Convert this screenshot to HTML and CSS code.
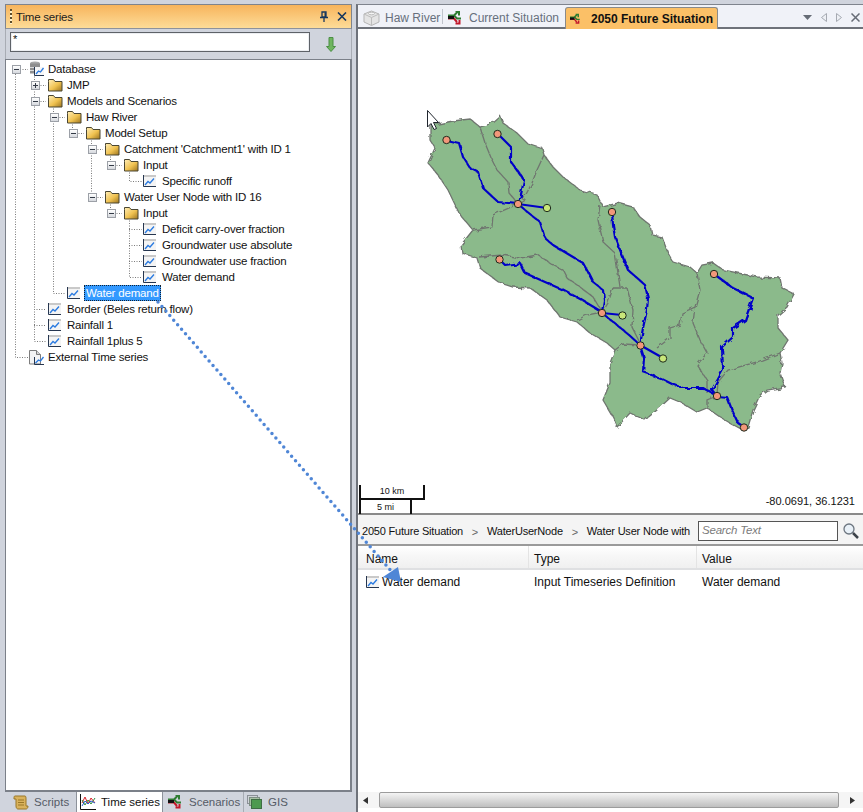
FILE: index.html
```html
<!DOCTYPE html>
<html lang="en">
<head>
<meta charset="utf-8">
<title>Time series</title>
<link rel="stylesheet" href="styles.css">
</head>
<body>
<svg class="defs" width="0" height="0" aria-hidden="true">
  <defs>
    <linearGradient id="fold" x1="0" y1="0" x2="1" y2="1"><stop offset="0" stop-color="#ffeeb8"/><stop offset=".55" stop-color="#f0c250"/><stop offset="1" stop-color="#9c7420"/></linearGradient>
    <symbol id="folder" viewBox="0 0 16 16">
      <path d="M.5 4.500V2.500h5l1.500 2h7v9.500H.5z" fill="url(#fold)" stroke="#4a4632"/>
    </symbol>
    <symbol id="chart" viewBox="0 0 16 16">
      <rect x="0" y="2" width="13" height="12" fill="#f4f4f4"/>
      <path d="M0 3h13" stroke="#c9c9c9" stroke-width="2"/>
      <path d="M.5 2v11.500H13" fill="none" stroke="#26364f"/>
      <path d="M2 12l3-3.500 2 1.500 4-4.500" fill="none" stroke="#2a7ae0" stroke-width="1.300"/>
    </symbol>
    <symbol id="flow" viewBox="0 0 16 14">
      <path d="M0 4.500h6l3-3M7.500 1h3.500v3.500" fill="none" stroke="#2f7d32" stroke-width="2"/>
      <path d="M6 4.500l3 3h4" fill="none" stroke="#2f7d32" stroke-width="2"/>
      <path d="M0 7.500h6l3 3.500M7.500 12.500h4v-3.500" fill="none" stroke="#c2182b" stroke-width="2"/>
      <path d="M0 6.500h6" stroke="#111" stroke-width="3"/>
    </symbol>
    <filter id="rough" x="-5%" y="-5%" width="110%" height="110%">
      <feTurbulence type="fractalNoise" baseFrequency="0.17" numOctaves="2" seed="4"/>
      <feDisplacementMap in="SourceGraphic" scale="5"/>
    </filter>
    <filter id="rough2" x="-5%" y="-5%" width="110%" height="110%">
      <feTurbulence type="fractalNoise" baseFrequency="0.16" numOctaves="2" seed="9"/>
      <feDisplacementMap in="SourceGraphic" scale="5"/>
    </filter>
  </defs>
</svg>

<div class="app">
  <aside class="left">
    <header class="panel-head">
      <span class="grip"></span>
      <span class="panel-title">Time series</span>
      <svg class="pin" width="10" height="11" viewBox="0 0 10 11"><path d="M3 1h4v5H3zM1 6.500h8M5 7v4" fill="none" stroke="#17375e" stroke-width="1.300"/><path d="M5.500 1.500h1.500v4.500H5.500z" fill="#17375e"/></svg>
      <svg class="close" width="10" height="9" viewBox="0 0 10 9"><path d="M1 .5l8 8M9 .5l-8 8" stroke="#17375e" stroke-width="1.600"/></svg>
    </header>
    <div class="search-row">
      <div class="filter">*</div>
      <svg class="down" width="10" height="15" viewBox="0 0 10 15"><path d="M3 .5h4v9h2.500L5 14.500.5 9.500H3z" fill="#6fb55f" stroke="#4b8f45"/></svg>
    </div>
    <div class="tree">
      <svg class="tree-lines" width="345" height="320" viewBox="6 59 345 320">
        <path d="M16.500 74V357.500H29M21 69.500h8M35.500 74V341.500H47M39 85.500h8M39 101.500h8M35 309.500h12M35 325.500h12M54.500 106V293.500H66M58 117.500h8M73.500 122v6M77 133.500h8M92.500 138V192M96 149.500h8M96 197.500h8M111.500 154v6M115 165.500h8M130.500 170V181.500H143M111.500 202v6M115 213.500h8M130.500 218V277.500H143M130 229.500h13M130 245.500h13M130 261.500h13" fill="none" stroke="#7b7b7b" stroke-dasharray="1 1.500"/>
      </svg>
      <div class="row d0"><span class="exp minus"></span><svg class="ic" width="16" height="16" viewBox="0 0 16 16"><ellipse cx="6" cy="2.500" rx="5" ry="2" fill="#a8a8a8"/><rect x="1" y="2.500" width="10" height="10" fill="#8f8f8f"/><path d="M1 6.500h10M1 9.500h10" stroke="#dcdcdc"/><rect x="5" y="6" width="10" height="9" fill="#f7f7f7"/><path d="M5.500 6v8.500H15" fill="none" stroke="#26364f"/><path d="M7 13l2.500-3 2 1 3-4" fill="none" stroke="#2a7ae0" stroke-width="1.300"/></svg><span class="lbl">Database</span></div>
      <div class="row d1"><span class="exp plus"></span><svg class="ic"><use href="#folder"/></svg><span class="lbl">JMP</span></div>
      <div class="row d1"><span class="exp minus"></span><svg class="ic"><use href="#folder"/></svg><span class="lbl">Models and Scenarios</span></div>
      <div class="row d2"><span class="exp minus"></span><svg class="ic"><use href="#folder"/></svg><span class="lbl">Haw River</span></div>
      <div class="row d3"><span class="exp minus"></span><svg class="ic"><use href="#folder"/></svg><span class="lbl">Model Setup</span></div>
      <div class="row d4"><span class="exp minus"></span><svg class="ic"><use href="#folder"/></svg><span class="lbl">Catchment 'Catchment1' with ID 1</span></div>
      <div class="row d5"><span class="exp minus"></span><svg class="ic"><use href="#folder"/></svg><span class="lbl">Input</span></div>
      <div class="row d6"><span class="exp"></span><svg class="ic"><use href="#chart"/></svg><span class="lbl">Specific runoff</span></div>
      <div class="row d4"><span class="exp minus"></span><svg class="ic"><use href="#folder"/></svg><span class="lbl">Water User Node with ID 16</span></div>
      <div class="row d5"><span class="exp minus"></span><svg class="ic"><use href="#folder"/></svg><span class="lbl">Input</span></div>
      <div class="row d6"><span class="exp"></span><svg class="ic"><use href="#chart"/></svg><span class="lbl">Deficit carry-over fraction</span></div>
      <div class="row d6"><span class="exp"></span><svg class="ic"><use href="#chart"/></svg><span class="lbl">Groundwater use absolute</span></div>
      <div class="row d6"><span class="exp"></span><svg class="ic"><use href="#chart"/></svg><span class="lbl">Groundwater use fraction</span></div>
      <div class="row d6"><span class="exp"></span><svg class="ic"><use href="#chart"/></svg><span class="lbl">Water demand</span></div>
      <div class="row d2"><span class="exp"></span><svg class="ic"><use href="#chart"/></svg><span class="lbl selected">Water demand</span></div>
      <div class="row d1"><span class="exp"></span><svg class="ic"><use href="#chart"/></svg><span class="lbl">Border (Beles return flow)</span></div>
      <div class="row d1"><span class="exp"></span><svg class="ic"><use href="#chart"/></svg><span class="lbl">Rainfall 1</span></div>
      <div class="row d1"><span class="exp"></span><svg class="ic"><use href="#chart"/></svg><span class="lbl">Rainfall 1plus 5</span></div>
      <div class="row d0"><span class="exp"></span><svg class="ic" width="16" height="16" viewBox="0 0 16 16"><path d="M.5 1.500h7l4 4v9.500H.5z" fill="#f4f4f4" stroke="#7d7d7d"/><path d="M7.500 1.500v4h4" fill="#d5d5d5" stroke="#7d7d7d"/><path d="M5.500 8v7.500H15" fill="none" stroke="#26364f"/><path d="M6.500 14l3-3 2 1 3-4" fill="none" stroke="#2a7ae0" stroke-width="1.300"/></svg><span class="lbl">External Time series</span></div>
    </div>
    <nav class="bottom-tabs">
      <span class="btab"><svg width="16" height="15" viewBox="0 0 16 15"><path d="M2 1h10c1 0 1 2 1 3v7h2c0 2-1 3-2 3H5c-1 0-2-1-2-3V4H1C1 2 1 1 2 1z" fill="#d9b25c" stroke="#9a7727"/><path d="M5 5h6M5 7.500h6M5 10h6" stroke="#9a7727"/></svg>Scripts</span>
      <span class="btab on"><svg width="16" height="16" viewBox="0 0 16 16"><path d="M.5 0v15.500H16" fill="none" stroke="#111"/><path d="M2 9l3-6 3 7 3-6 4 5" fill="none" stroke="#d8232a"/><path d="M2 6l3 5 3-5 3 4 4-6" fill="none" stroke="#2c8a3c"/><path d="M2 12l3-5 3 3 3-3 4 2" fill="none" stroke="#2a5fd0"/></svg>Time series</span>
      <span class="btab"><svg width="16" height="14"><use href="#flow"/></svg>Scenarios</span>
      <span class="btab gis"><svg width="15" height="14" viewBox="0 0 15 14"><rect x=".5" y=".5" width="10" height="8" fill="#d0d4d8" stroke="#8b9097"/><rect x="2.500" y="2.500" width="10" height="8" fill="#a8c2a4" stroke="#7f8f85"/><rect x="4.500" y="4.500" width="10" height="9" fill="#4d9a4f" stroke="#3f6d44"/></svg>GIS</span>
    </nav>
  </aside>

  <main class="right">
    <div class="doc-tabs">
      <span class="dtab"><svg width="17" height="16" viewBox="0 0 17 16"><path d="M8.500 1l7.500 3v8l-7.500 3.500L1 12V4z" fill="#e4e4e4" stroke="#b5b5b5"/><path d="M1 4l7.500 3.500L16 4M8.500 7.500v8" fill="none" stroke="#bdbdbd"/><ellipse cx="8.500" cy="3.500" rx="3" ry="1.300" fill="#f4f4f4" stroke="#bbb"/></svg>Haw River</span>
      <span class="dsep"></span>
      <span class="dtab flow"><svg width="16" height="14"><use href="#flow"/></svg>Current Situation</span>
      <span class="dtab active"><svg width="16" height="14"><use href="#flow"/></svg>2050 Future Situation</span>
      <span class="tab-tools">
        <svg width="9" height="5" viewBox="0 0 9 5"><path d="M0 0h9L4.500 5z" fill="#666c76"/></svg>
        <svg width="6" height="9" viewBox="0 0 6 9"><path d="M5.500.5v8L.5 4.500z" fill="#eef0f5" stroke="#a6aab2"/></svg>
        <svg width="6" height="9" viewBox="0 0 6 9"><path d="M.5.500v8l5-4z" fill="#eef0f5" stroke="#a6aab2"/></svg>
        <svg width="9" height="9" viewBox="0 0 9 9"><path d="M.5.500l8 8M8.500.500l-8 8" stroke="#666c76" stroke-width="1.500"/></svg>
      </span>
    </div>
    <section class="map">
      <svg class="map-svg" width="505" height="484" viewBox="358 29 505 484">
        <g filter="url(#rough)">
          <polygon class="basin" points="430,120 438,124 453,121 470,119 480,127 490,124 500,115 503,123 517,133 527,143 542,148 544,155 553,167 563,177 580,190 597,195 603,207 618,203 633,207 640,217 650,225 652,235 662,237 668,253 673,262 690,267 697,273 702,265 713,263 723,270 757,277 780,278 782,288 794,294 787,307 778,315 778,328 788,340 780,353 782,363 780,373 785,387 767,390 760,395 753,410 748,427 743,430 730,423 720,417 707,408 697,412 682,403 670,398 657,410 645,420 630,413 617,427 613,417 603,400 610,383 610,363 615,350 607,343 590,333 577,322 560,317 547,300 530,288 513,287 500,283 480,268 477,258 462,253 461,245 473,230 460,215 448,190 438,175 428,163 435,148 430,140"/>
          <path class="border" d="M480 127L485 143 492 160 497 170 508 182 509 193 518 204M544 155L537 170 532 183 523 200 518 204M518 204L493 215 492 227 473 230M479 257L503 255 520 258 538 255 553 265 563 270 567 278 580 287 593 297 602 312M577 320L587 315 602 312M600 205L598 220 603 242 615 253 620 287M613 288H627L633 310 632 327 640 343M613 288L608 303 602 313M657 348L670 338 670 328 680 325 682 313 695 307 700 290 697 273M695 307L693 323 700 340 707 353 697 365 707 380 707 393M780 353L757 362 728 370 718 382 717 395M707 408L707 400 717 396M615 350L623 344 640 345"/>
        </g>
        <g filter="url(#rough2)">
          <path class="river" d="M446 140L459 143 463 157 470 168 478 172 483 188 498 202 518 204M498 134L511 147 511 162 524 180 519 204M518 204L525 210 540 222 544 235 547 240 553 245 568 254 583 263 588 272 593 282 603 290 604 300 602 312M499 259L505 265 520 263 525 273 545 282 563 290 582 300 602 312M612 212L613 225 615 237 622 255 628 270 645 285 648 298 647 310 643 328 640 345M602 313L617 325 628 334 640 345M640 345L644 358 643 372 660 378 672 384 683 388 703 388 717 396M714 274L733 288 753 298 745 320 733 328 733 337 722 347 723 370 712 390 717 396M717 396L727 397 732 410 738 423 744 427"/>
        </g>
        <path class="river" d="M518 204L547 208M602 313L622 315M640 345L663 358"/>
        <g class="node">
          <circle cx="446.500" cy="140" r="3.700"/><circle cx="497.500" cy="134" r="3.700"/><circle cx="518" cy="204" r="3.700"/><circle cx="612" cy="212" r="3.700"/><circle cx="499.500" cy="259.500" r="3.700"/><circle cx="602" cy="313" r="3.700"/><circle cx="640.500" cy="345.500" r="3.700"/><circle cx="714" cy="274" r="3.700"/><circle cx="717" cy="396" r="3.700"/><circle cx="744" cy="427.500" r="3.700"/>
        </g>
        <g class="node green">
          <circle cx="547" cy="208" r="3.700"/><circle cx="622.500" cy="315.500" r="3.700"/><circle cx="663" cy="358.500" r="3.700"/>
        </g>
        <path class="cursor" d="M427.500 110.500V127l3.500-3.500 3 6 2.500-1-3-6h5z"/>
      </svg>
      <div class="scale">
        <div class="km"><span>10 km</span></div>
        <div class="mi"><span>5 mi</span></div>
      </div>
      <div class="coords">-80.0691, 36.1231</div>
    </section>
    <div class="crumbs">
      <span class="crumb">2050 Future Situation</span><span class="gt">&gt;</span>
      <span class="crumb">WaterUserNode</span><span class="gt">&gt;</span>
      <span class="crumb">Water User Node with</span>
      <span class="searchbox">Search Text</span>
      <svg class="glass" width="18" height="18" viewBox="0 0 18 18"><circle cx="7" cy="7" r="5" fill="#e9f1f8" stroke="#6d7680" stroke-width="1.300"/><path d="M11 11l5 5" stroke="#3d434a" stroke-width="2.500"/></svg>
    </div>
    <div class="table-head"><span class="c1">Name</span><span class="c2">Type</span><span class="c3">Value</span></div>
    <div class="table-row"><span class="c1 name"><svg width="16" height="16"><use href="#chart"/></svg>Water demand</span><span class="c2">Input Timeseries Definition</span><span class="c3">Water demand</span></div>
    <div class="table-fill"></div>
    <div class="hscroll">
      <svg width="5" height="7" viewBox="0 0 5 7"><path d="M5 0v7L0 3.500z" fill="#333"/></svg>
      <span class="thumb"></span>
      <svg width="5" height="7" viewBox="0 0 5 7"><path d="M0 0v7l5-3.500z" fill="#333"/></svg>
    </div>
  </main>
</div>

<svg class="drag" width="863" height="812" viewBox="0 0 863 812">
  <path d="M158 302L392 572" fill="none" stroke="#4f86d6" stroke-width="3.500" stroke-linecap="round" stroke-dasharray="0 6"/>
  <path d="M398 567L401 582 383 577z" fill="#4f86d6"/>
</svg>
</body>
</html>
```

FILE: styles.css
```css
* { box-sizing: border-box; }
html, body { margin: 0; height: 812px; overflow: hidden; }
body { background: #d0d4dd; font-family: "Liberation Sans", Arial, sans-serif; font-size: 12px; color: #111; position: relative; }
.defs { position: absolute; }
.app { display: flex; height: 812px; padding: 4px 0 0 5px; gap: 4px; }

.left { width: 347px; display: flex; flex-direction: column; flex: none; font-size: 11.500px; letter-spacing: -.2px; }
.panel-head { height: 25px; flex: none; display: flex; align-items: center; padding: 0 4px 0 4px; background: linear-gradient(#f7b45c, #fddc98); border: 1px solid #7f848d; border-bottom: 1px solid #8d929b; }
.grip { width: 2px; height: 15px; margin-right: 4px; background: repeating-linear-gradient(#5a4a2a 0 2px, #fff3cf 2px 4px); }
.panel-title { flex: 1; color: #1c1c1c; }
.pin { margin-right: 8px; }
.search-row { height: 30px; flex: none; display: flex; align-items: flex-start; padding: 3px 0 0 4px; border-left: 1px solid #a8acb4; border-right: 1px solid #a8acb4; }
.filter { width: 300px; height: 20px; background: #fff; border: 1px solid #5e6268; box-shadow: inset 0 0 0 1px #eceef2; padding: 1px 2px; font-size: 11px; line-height: 11px; }
.down { margin: 5px 0 0 16px; }
.tree { position: relative; height: 733px; flex: none; background: #fff; border: 1px solid #7b8089; border-width: 1px 2px 2px 1px; padding-top: 1px; }
.tree-lines { position: absolute; left: -1px; top: -1px; }
.row { height: 16px; display: flex; align-items: center; position: relative; }
.d0 { padding-left: 6px; }
.d1 { padding-left: 25px; }
.d2 { padding-left: 44px; }
.d3 { padding-left: 63px; }
.d4 { padding-left: 82px; }
.d5 { padding-left: 101px; }
.d6 { padding-left: 120px; }
.exp { width: 9px; height: 9px; margin-right: 8px; flex: none; position: relative; }
.exp.minus, .exp.plus { background: linear-gradient(#fff, #d6d9de); border: 1px solid #9ca0a7; }
.exp.minus::before, .exp.plus::before { content: ""; position: absolute; left: 1px; top: 3px; width: 5px; height: 1px; background: #333a46; }
.exp.plus::after { content: ""; position: absolute; left: 3px; top: 1px; width: 1px; height: 5px; background: #333a46; }
.ic { width: 16px; height: 16px; flex: none; }
.lbl { margin-left: 3px; white-space: nowrap; line-height: 15px; }
.selected { background: #3399ff; color: #fff; outline: 1px dotted #123; outline-offset: -1px; padding: 0 2px; margin-left: 1px; height: 16px; line-height: 16px; }

.bottom-tabs { height: 20px; flex: none; display: flex; align-items: center; padding-left: 8px; color: #555b66; white-space: nowrap; letter-spacing: 0; }
.btab { display: flex; align-items: center; gap: 5px; height: 20px; flex: none; }
.btab:first-child { width: 63px; }
.btab.on { background: #fff; color: #111; width: 87px; padding-left: 3px; gap: 5px; border: 1px solid #8d929b; border-width: 0 1px; }
.btab:nth-child(3) { margin-left: 5px; width: 75px; }
.btab.gis { border-left: 1px solid #a8acb4; padding-left: 3px; gap: 6px; }

.right { flex: 1; min-width: 0; display: flex; flex-direction: column; background: #fff; border-left: 2px solid #6e727a; border-top: 1px solid #7f848d; }
.doc-tabs { height: 24px; flex: none; background: #f0f2f8; border-bottom: 2px solid #6e727a; display: flex; align-items: flex-end; padding-left: 5px; color: #67707d; position: relative; }
.dtab { display: flex; align-items: center; gap: 5px; height: 22px; padding-top: 3px; white-space: nowrap; }
.dtab:first-child { width: 79px; }
.dsep { width: 1px; height: 15px; background: #c0c4cc; margin: 0 5px 3px 0; }
.dtab.flow { gap: 5px; width: 117px; }
.dtab.active { position: relative; top: 2px; height: 22px; background: #fbc067; color: #111; font-weight: 700; padding: 0 4px; gap: 9px; width: 153px; border: 1px solid #8a8a8a; border-bottom: 0; border-radius: 3px 3px 0 0; }
.tab-tools { position: absolute; right: 3px; top: 8px; display: flex; align-items: center; gap: 9px; }

.map { height: 486px; flex: none; position: relative; background: #fff; border-bottom: 2px solid #8a8a8a; }
.map-svg { display: block; }
.basin { fill: #8bba8b; stroke: #6f756f; stroke-width: 1.300; }
.border { fill: none; stroke: #6f756f; stroke-width: 1.300; }
.river { fill: none; stroke: #0000c8; stroke-width: 2.200; stroke-linejoin: round; }
.node circle { fill: #f2977a; stroke: #1d2a1d; stroke-width: 1; }
.green circle { fill: #c8e67a; }
.cursor { fill: #fff; stroke: #20262e; stroke-width: 1; }
.scale { position: absolute; left: 1px; top: 456px; width: 66px; font-size: 9px; line-height: 12px; color: #111; }
.km { height: 15px; border: solid #111; border-width: 0 2px 2px 2px; text-align: center; }
.mi { width: 53px; height: 14px; border-right: 2px solid #111; border-left: 2px solid #111; text-align: center; line-height: 15px; }
.coords { position: absolute; right: 8px; top: 466px; font-size: 11px; }

.crumbs { height: 31px; flex: none; background: #f4f4f4; border-bottom: 2px solid #9a9a9a; display: flex; align-items: center; padding: 3px 3px 0 4px; white-space: nowrap; font-size: 11px; letter-spacing: -.2px; }
.crumb { flex: none; }
.gt { width: 24px; flex: none; text-align: center; color: #666; font-size: 11px; position: relative; top: 1px; }
.searchbox { width: 140px; height: 20px; margin-left: auto; flex: none; background: #fff; border: 1px solid #555; padding: 1px 3px; font-style: italic; font-size: 11.500px; color: #7c7c7c; line-height: 15px; }
.glass { margin-left: 4px; flex: none; }
.table-head { height: 24px; flex: none; display: flex; align-items: center; background: linear-gradient(#fff, #f6f6f6 50%, #f0f0f0); border-bottom: 2px solid #dfe0e2; padding: 3px 0 0 8px; }
.c1 { width: 162px; flex: none; }
.c2 { width: 168px; flex: none; }
.c2, .c3 { padding-left: 6px; }
.table-head .c2, .table-head .c3 { border-left: 1px solid #e4e4e4; padding-left: 5px; height: 22px; line-height: 20px; margin-top: -3px; padding-top: 3px; }
.table-row { height: 23px; flex: none; display: flex; align-items: center; padding-left: 8px; }
.name { display: flex; align-items: center; }
.table-fill { height: 199px; flex: none; }
.hscroll { height: 16px; flex: none; display: flex; align-items: center; gap: 11px; padding: 0 8px 0 5px; background: #f5f5f5; }
.thumb { flex: 1; height: 16px; border: 1px solid #9c9c9c; border-radius: 2px; background: linear-gradient(#f4f4f4, #bfbfbf); }

.drag { position: absolute; left: 0; top: 0; pointer-events: none; }
```
